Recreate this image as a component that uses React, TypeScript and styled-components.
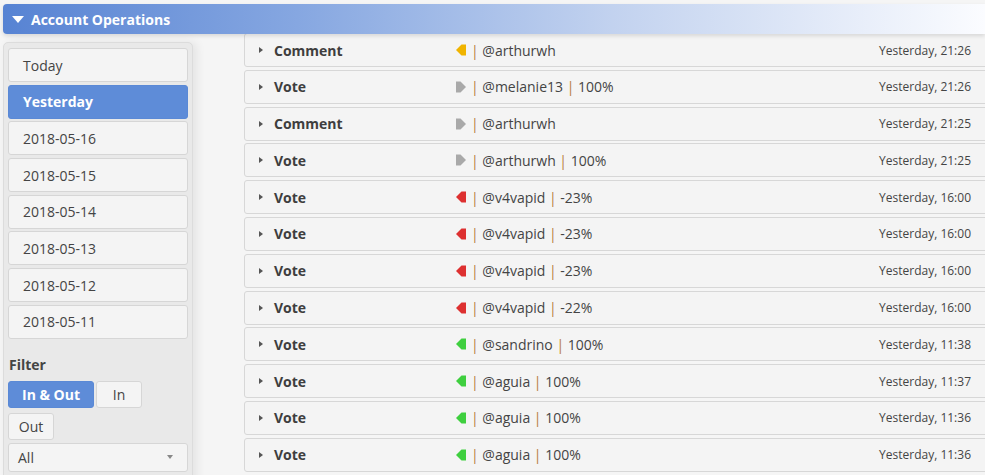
import { FC } from "react";
import styled, { createGlobalStyle } from "styled-components";

type Direction = "in" | "out";

interface Operation {
  kind: string;
  direction: Direction;
  color: string;
  parts: string[];
  time: string;
}

const dates = [
  "Today",
  "Yesterday",
  "2018-05-16",
  "2018-05-15",
  "2018-05-14",
  "2018-05-13",
  "2018-05-12",
  "2018-05-11",
];

const ORANGE = "#f0b400";
const GRAY = "#a9a9a9";
const RED = "#dd3030";
const GREEN = "#3fcf3f";

const operations: Operation[] = [
  { kind: "Comment", direction: "in", color: ORANGE, parts: ["@arthurwh"], time: "Yesterday, 21:26" },
  { kind: "Vote", direction: "out", color: GRAY, parts: ["@melanie13", "100%"], time: "Yesterday, 21:26" },
  { kind: "Comment", direction: "out", color: GRAY, parts: ["@arthurwh"], time: "Yesterday, 21:25" },
  { kind: "Vote", direction: "out", color: GRAY, parts: ["@arthurwh", "100%"], time: "Yesterday, 21:25" },
  { kind: "Vote", direction: "in", color: RED, parts: ["@v4vapid", "-23%"], time: "Yesterday, 16:00" },
  { kind: "Vote", direction: "in", color: RED, parts: ["@v4vapid", "-23%"], time: "Yesterday, 16:00" },
  { kind: "Vote", direction: "in", color: RED, parts: ["@v4vapid", "-23%"], time: "Yesterday, 16:00" },
  { kind: "Vote", direction: "in", color: RED, parts: ["@v4vapid", "-22%"], time: "Yesterday, 16:00" },
  { kind: "Vote", direction: "in", color: GREEN, parts: ["@sandrino", "100%"], time: "Yesterday, 11:38" },
  { kind: "Vote", direction: "in", color: GREEN, parts: ["@aguia", "100%"], time: "Yesterday, 11:37" },
  { kind: "Vote", direction: "in", color: GREEN, parts: ["@aguia", "100%"], time: "Yesterday, 11:36" },
  { kind: "Vote", direction: "in", color: GREEN, parts: ["@aguia", "100%"], time: "Yesterday, 11:36" },
];

const DirectionIcon: FC<{ direction: Direction; color: string }> = ({ direction, color }) => (
  <StyledDirectionIcon width="10" height="12" viewBox="0 0 10 12">
    <polygon
      fill={color}
      points={direction === "in" ? "0,6 5.5,0.5 10,0.5 10,11.5 5.5,11.5" : "0,0.5 4.5,0.5 10,6 4.5,11.5 0,11.5"}
    />
  </StyledDirectionIcon>
);

const OperationRow: FC<Operation> = ({ kind, direction, color, parts, time }) => (
  <StyledRow>
    <StyledExpander />
    <StyledKind>{kind}</StyledKind>
    <StyledDetail>
      <DirectionIcon direction={direction} color={color} />
      {parts.map((part, i) => (
        <span key={i}>
          <StyledPipe>|</StyledPipe> {part}{" "}
        </span>
      ))}
    </StyledDetail>
    <StyledTime>{time}</StyledTime>
  </StyledRow>
);

const App: FC = () => {
  return (
    <>
      <GlobalStyle />
      <StyledPage>
        <StyledHeader>
          <StyledHeaderCaret />
          Account Operations
        </StyledHeader>

        <StyledBody>
          <StyledSidebar>
            <StyledDateList>
              {dates.map((d) => (
                <StyledDateButton key={d} $active={d === "Yesterday"}>
                  {d}
                </StyledDateButton>
              ))}
            </StyledDateList>

            <StyledFilterLabel>Filter</StyledFilterLabel>
            <StyledFilterGroup>
              <StyledFilterButton $active>In &amp; Out</StyledFilterButton>
              <StyledFilterButton>In</StyledFilterButton>
              <StyledFilterButton>Out</StyledFilterButton>
            </StyledFilterGroup>

            <StyledSelect>
              All
              <StyledSelectCaret />
            </StyledSelect>
          </StyledSidebar>

          <StyledList>
            {operations.map((op, i) => (
              <OperationRow key={i} {...op} />
            ))}
          </StyledList>
        </StyledBody>
      </StyledPage>
    </>
  );
};

export default App;

const GlobalStyle = createGlobalStyle`
  html, body {
    margin: 0;
    padding: 0;
    background: #f5f5f5;
    font-family: "Open Sans", "DejaVu Sans", sans-serif;
    color: #444;
    overflow: hidden;
  }
`;

const StyledPage = styled.div`
  height: 475px;
  overflow: hidden;
`;

const StyledHeader = styled.div`
  position: relative;
  z-index: 2;
  display: flex;
  align-items: center;
  height: 30px;
  margin: 4px 0 0 3px;
  padding-left: 9px;
  border-radius: 4px 0 0 4px;
  background: linear-gradient(
    to right,
    #5783d3 0%,
    #86a7e1 30%,
    #c2d2ef 62%,
    #fbfcff 100%
  );
  box-shadow: 0 2px 4px rgba(0, 0, 0, 0.12);
  color: #fff;
  font-weight: 700;
  font-size: 14px;
`;

const StyledHeaderCaret = styled.span`
  width: 0;
  height: 0;
  margin-right: 7px;
  margin-top: 1px;
  border-left: 6px solid transparent;
  border-right: 6px solid transparent;
  border-top: 7px solid #fff;
`;

const StyledBody = styled.div`
  display: flex;
  margin-top: -1px;
`;

const StyledSidebar = styled.div`
  flex: none;
  width: 180px;
  margin: 9px 0 0 3px;
  padding: 5px 4px 20px;
  background: #e9e9e9;
  border: 1px solid #dcdcdc;
  border-radius: 5px;
  box-shadow: 4px 0 10px rgba(0, 0, 0, 0.07);
`;

const StyledDateList = styled.div`
  display: flex;
  flex-direction: column;
  gap: 2.7px;
`;

const StyledDateButton = styled.div<{ $active?: boolean }>`
  box-sizing: border-box;
  height: 34px;
  display: flex;
  align-items: center;
  padding-left: 14px;
  border: 1px solid ${({ $active }) => ($active ? "#5a89d6" : "#d6d6d6")};
  border-radius: 3px;
  background: ${({ $active }) => ($active ? "#5e8cd8" : "#f4f4f4")};
  color: ${({ $active }) => ($active ? "#fff" : "#444")};
  font-weight: ${({ $active }) => ($active ? 700 : 400)};
  font-size: 14px;
`;

const StyledFilterLabel = styled.div`
  margin-top: 16px;
  padding-left: 1px;
  font-weight: 700;
  font-size: 14px;
  line-height: 20px;
`;

const StyledFilterGroup = styled.div`
  display: flex;
  flex-wrap: wrap;
  column-gap: 2px;
  row-gap: 5px;
  margin-top: 6px;
`;

const StyledFilterButton = styled.div<{ $active?: boolean }>`
  box-sizing: border-box;
  height: 27px;
  min-width: 46px;
  display: flex;
  align-items: center;
  justify-content: center;
  padding: 0 ${({ $active }) => ($active ? "13px" : "9px")};
  border: 1px solid ${({ $active }) => ($active ? "#5a89d6" : "#d6d6d6")};
  border-radius: 3px;
  background: ${({ $active }) => ($active ? "#5e8cd8" : "#f4f4f4")};
  color: ${({ $active }) => ($active ? "#fff" : "#444")};
  font-weight: ${({ $active }) => ($active ? 700 : 400)};
  font-size: 14px;
`;

const StyledSelect = styled.div`
  box-sizing: border-box;
  height: 29px;
  margin-top: 3px;
  display: flex;
  align-items: center;
  justify-content: space-between;
  padding: 0 14px 0 9px;
  border: 1px solid #d6d6d6;
  border-radius: 3px;
  background: #f4f4f4;
  font-size: 14px;
`;

const StyledSelectCaret = styled.span`
  width: 0;
  height: 0;
  border-left: 3.5px solid transparent;
  border-right: 3.5px solid transparent;
  border-top: 4px solid #888;
`;

const StyledList = styled.div`
  flex: 1;
  display: flex;
  flex-direction: column;
  gap: 2.8px;
  margin: 0 -4px 0 51px;
`;

const StyledRow = styled.div`
  box-sizing: border-box;
  flex: none;
  height: 34px;
  display: flex;
  align-items: center;
  padding: 0 17px 0 14px;
  background: #f4f4f4;
  border: 1px solid #d7d7d7;
  border-radius: 3px;
  font-size: 14px;
`;

const StyledExpander = styled.span`
  width: 0;
  height: 0;
  margin-right: 11px;
  border-left: 4px solid #555;
  border-top: 3.5px solid transparent;
  border-bottom: 3.5px solid transparent;
`;

const StyledKind = styled.span`
  width: 182px;
  font-weight: 700;
  color: #3e3e3e;
`;

const StyledDetail = styled.span`
  flex: 1;
  display: flex;
  align-items: center;
  white-space: pre;
  color: #444;
`;

const StyledDirectionIcon = styled.svg`
  flex: none;
  margin-right: 5px;
`;

const StyledPipe = styled.span`
  color: #b77b40;
`;

const StyledTime = styled.span`
  font-size: 12px;
  color: #444;
`;
